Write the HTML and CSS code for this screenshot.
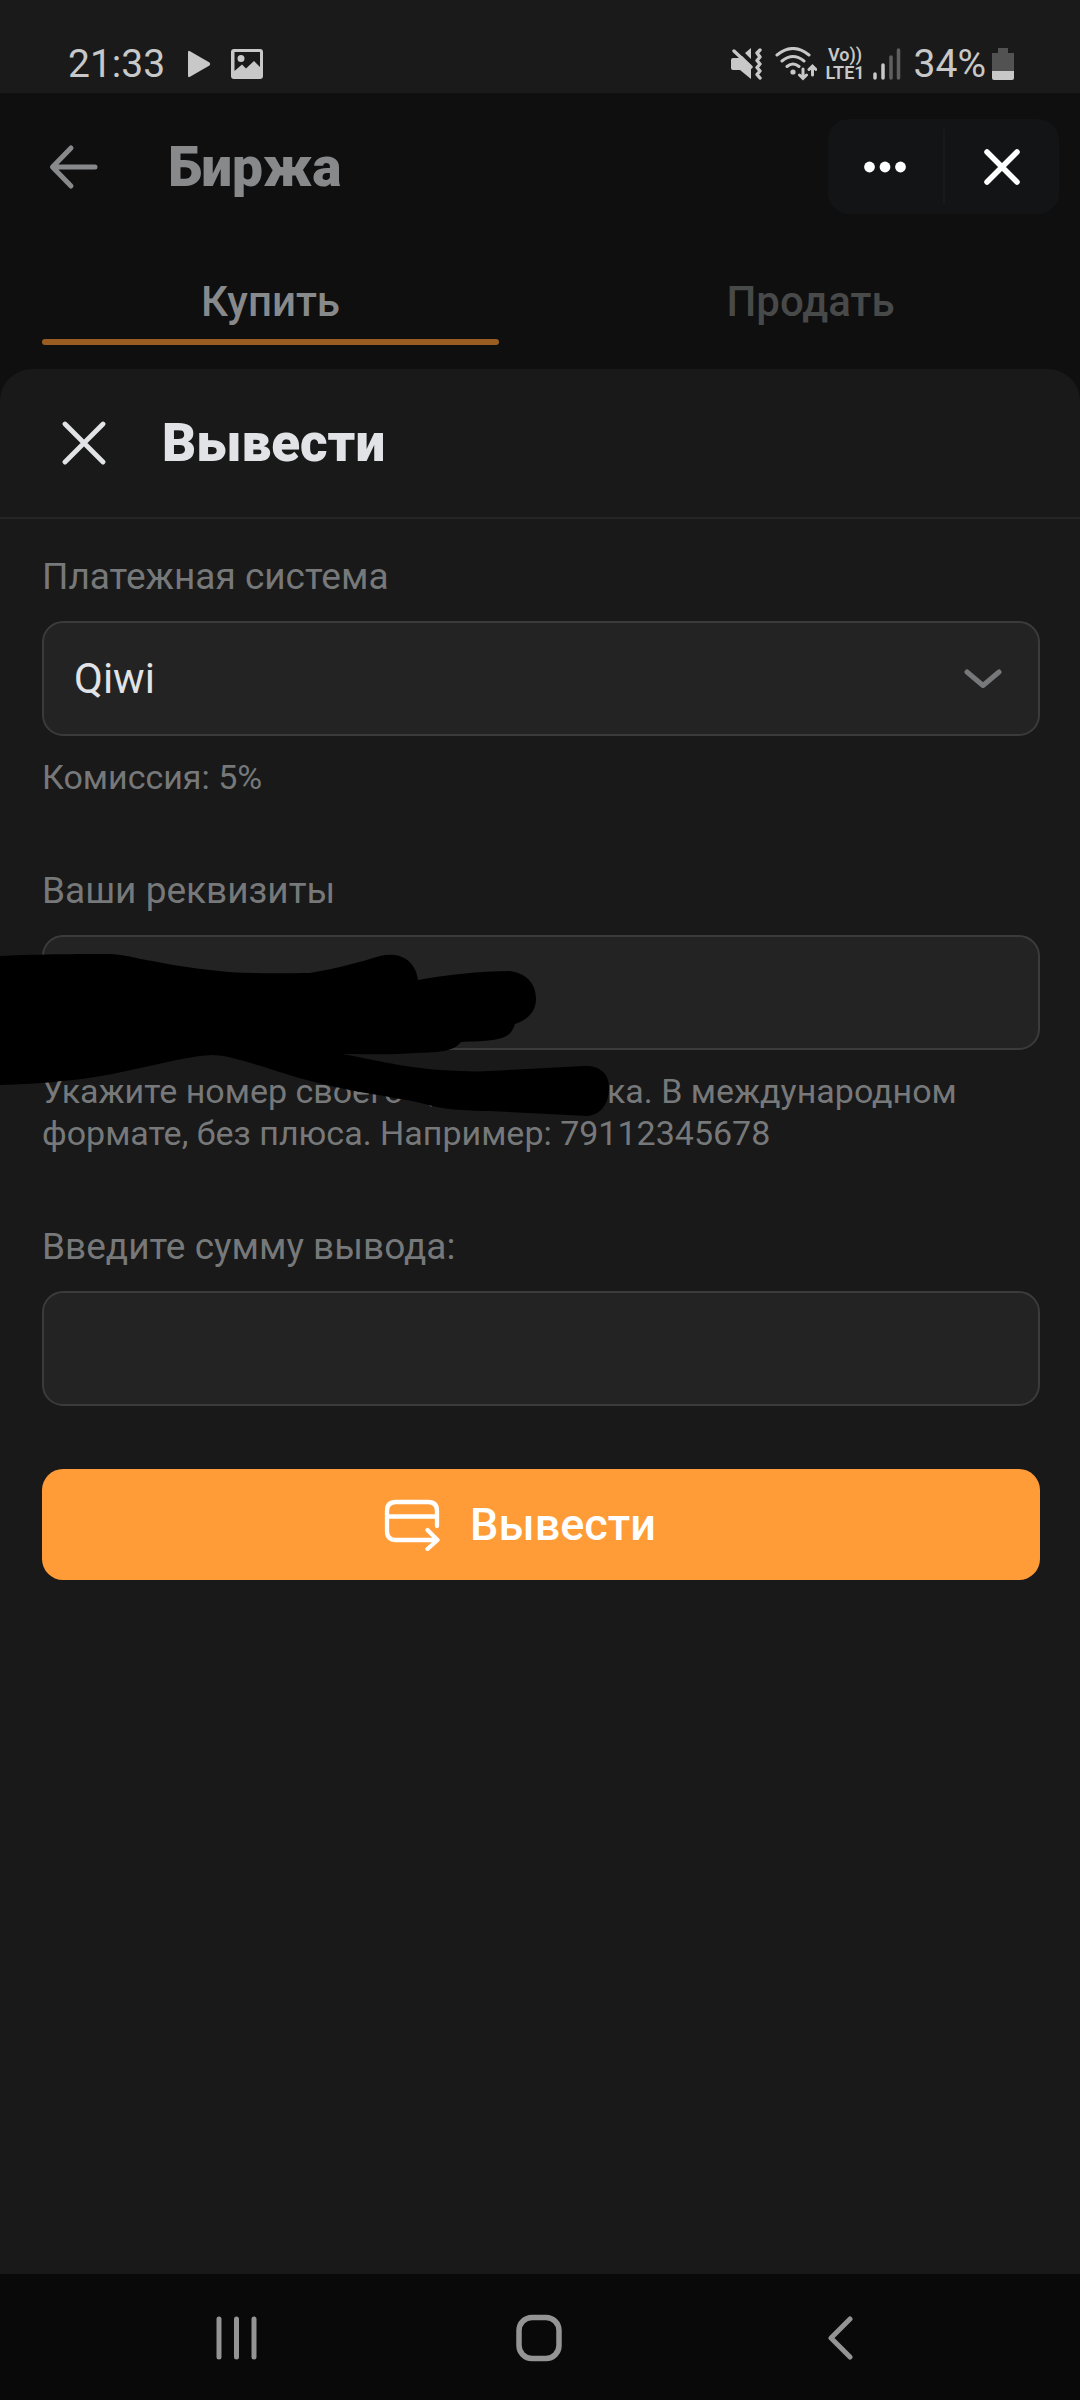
FILE: index.html
```html
<!DOCTYPE html>
<html lang="ru">
<head>
<meta charset="utf-8">
<meta name="viewport" content="width=device-width">
<title>Биржа — Вывести</title>
<link rel="stylesheet" href="styles.css">
</head>
<body>
<div class="status-bar">
  <div class="status-left">
    <span class="clock">21:33</span>
    <svg class="icon-play" width="24" height="28" viewBox="0 0 24 28" aria-hidden="true"><path d="M1 2.500Q1 0 3 1.200L22.500 12.500Q24 14 22.500 15.500L3 26.800Q1 28 1 25.500Z" fill="currentColor"/></svg>
    <svg width="32" height="30" viewBox="0 0 32 30" aria-hidden="true"><path fill="currentColor" fill-rule="evenodd" d="M3 0H29Q32 0 32 3V27Q32 30 29 30H3Q0 30 0 27V3Q0 0 3 0ZM3.500 3V22L11 15.500L15 19.500L23 12L29 18V3ZM10 6A3.500 3.500 0 1 1 10 13A3.500 3.500 0 1 1 10 6Z"/></svg>
  </div>
  <div class="status-right">
    <svg width="32" height="32" viewBox="0 0 32 32" aria-hidden="true"><path d="M0 12Q0 10 2 10H8L11 8L20 17V31L9 22H2Q0 22 0 20ZM14 5L20 0V11Z" fill="currentColor"/><path d="M3 3L20 19M29 2L26 5L29 9L26 12.500L29 16L26 19.500L29 23L26 26.500L29 30" fill="none" stroke="currentColor" stroke-width="3.400" stroke-linecap="round" stroke-linejoin="round"/></svg>
    <svg width="42" height="34" viewBox="0 0 42 34" aria-hidden="true"><g fill="none" stroke="currentColor" stroke-width="3" stroke-linecap="round"><path d="M2 8Q18 -5 34 8M7 14Q18 5 29 14M12 19.500Q18 14.500 24 19.500"/><path d="M28 22V31M24.500 28L28 31.500L31.500 28M37.500 28V19.500M34 22.500L37.500 19L41 22.500"/></g><circle cx="18" cy="25" r="2.600" fill="currentColor"/></svg>
    <span class="volte"><span>Vo))</span><span>LTE1</span></span>
    <svg width="28" height="32" viewBox="0 0 28 32" aria-hidden="true"><g fill="none" stroke="currentColor" stroke-width="3.500" stroke-linecap="round"><path d="M2 26V30M10 17V30"/><path d="M18 9V30M25.500 2V30" opacity=".4"/></g></svg>
    <span class="charge">34%</span>
    <svg width="22" height="34" viewBox="0 0 22 34" aria-hidden="true"><path d="M6 1H16V6H22V24H0V6H6Z" fill="#525252"/><path d="M0 24H22V31Q22 33 20 33H2Q0 33 0 31Z" fill="currentColor"/></svg>
  </div>
</div>

<header class="app-header">
  <button class="icon-button back" aria-label="Назад"><svg width="50" height="46" viewBox="0 0 50 46"><path d="M46 23H4M22 4L3.500 23L22 42" fill="none" stroke="currentColor" stroke-width="5" stroke-linecap="round" stroke-linejoin="round"/></svg></button>
  <h1 class="app-title">Биржа</h1>
  <div class="capsule">
    <button class="icon-button" aria-label="Ещё"><svg width="44" height="12" viewBox="0 0 44 12" fill="currentColor"><circle cx="6.500" cy="6" r="5.400"/><circle cx="22" cy="6" r="5.400"/><circle cx="37.500" cy="6" r="5.400"/></svg></button>
    <button class="icon-button" aria-label="Закрыть приложение"><svg width="36" height="36" viewBox="0 0 36 36"><path d="M3 3L33 33M33 3L3 33" stroke="currentColor" stroke-width="5.500" stroke-linecap="round"/></svg></button>
  </div>
</header>

<nav class="tabs">
  <button class="tab active">Купить</button>
  <button class="tab">Продать</button>
</nav>

<main class="sheet">
  <div class="sheet-header">
    <button class="icon-button sheet-close" aria-label="Закрыть"><svg width="44" height="44" viewBox="0 0 44 44"><path d="M3 3L41 41M41 3L3 41" stroke="currentColor" stroke-width="4.800" stroke-linecap="round"/></svg></button>
    <h2 class="sheet-title">Вывести</h2>
  </div>
  <form class="form">
    <div class="field">
      <label class="label" for="system">Платежная система</label>
      <div class="control-wrap">
        <select class="control" id="system"><option>Qiwi</option></select>
        <svg class="chevron" width="38" height="20" viewBox="0 0 38 20" aria-hidden="true"><path d="M3 3L19 16.500L35 3" fill="none" stroke="currentColor" stroke-width="5" stroke-linecap="round" stroke-linejoin="round"/></svg>
      </div>
      <p class="hint">Комиссия: 5%</p>
    </div>
    <div class="field">
      <label class="label" for="account">Ваши реквизиты</label>
      <div class="control-wrap">
        <input class="control" id="account" type="text">
        <svg class="redaction" width="640" height="190" viewBox="0 936 640 190" aria-hidden="true"><path d="M0 957C40 955 90 955 112 955C132 957 138 960 152 962C180 968 210 971 228 973C260 975 290 974 310 974C335 970 360 963 380 957C403 952 416 964 418 981C445 976 480 972 510 972C530 975 536 988 536 1000C536 1013 527 1021 515 1025C511 1036 507 1038 498 1040C485 1043 472 1042 461 1043C453 1053 440 1053 416 1054C390 1056 370 1055 343 1055C370 1060 400 1068 441 1071C460 1072 475 1073 490 1072L584 1067C602 1066 609 1077 609 1088C609 1104 602 1115 588 1117L490 1112C465 1112 440 1110 425 1105C415 1103 410 1101 400 1100C375 1095 350 1092 327 1086C300 1080 280 1073 261 1067C240 1061 225 1056 212 1056C195 1057 180 1060 163 1064C130 1071 95 1080 61 1082C40 1085 20 1085 0 1086Z"/></svg>
      </div>
      <p class="hint">Укажите номер своего Qiwi кошелька. В международном формате, без плюса. Например: 79112345678</p>
    </div>
    <div class="field">
      <label class="label" for="amount">Введите сумму вывода:</label>
      <div class="control-wrap"><input class="control" id="amount" type="text"></div>
    </div>
    <button class="submit" type="button">
      <svg width="56" height="52" viewBox="0 0 56 52" aria-hidden="true"><path d="M53 27V12Q53 3 44 3H12Q3 3 3 12V32Q3 41 12 41H51M3 17.500H53M43.500 31L53.500 41L43.500 50" fill="none" stroke="currentColor" stroke-width="4.300" stroke-linecap="round" stroke-linejoin="round"/></svg>
      <span>Вывести</span>
    </button>
  </form>
</main>

<footer class="system-nav">
  <button class="icon-button" aria-label="Недавние"><svg width="42" height="44" viewBox="0 0 42 44"><path d="M3 3V41M20.500 3V41M38 3V41" stroke="currentColor" stroke-width="5" stroke-linecap="round"/></svg></button>
  <button class="icon-button" aria-label="Главный экран"><svg width="46" height="48" viewBox="0 0 46 48"><rect x="3" y="3.500" width="40" height="41" rx="13" fill="none" stroke="currentColor" stroke-width="5.500"/></svg></button>
  <button class="icon-button" aria-label="Назад"><svg width="26" height="44" viewBox="0 0 26 44"><path d="M23 3L4 22L23 41" fill="none" stroke="currentColor" stroke-width="5" stroke-linecap="round" stroke-linejoin="round"/></svg></button>
</footer>
</body>
</html>
```
FILE: styles.css
```css
* { box-sizing: border-box; }

body {
  margin: 0;
  min-height: 100vh;
  display: flex;
  flex-direction: column;
  background: #0f0f0f;
  color: #e1e3e6;
  font-family: Roboto, "Noto Sans", sans-serif;
}

h1, h2, p { margin: 0; }
svg { display: block; flex: none; }
button, input, select { font: inherit; color: inherit; }

.icon-button {
  display: flex;
  align-items: center;
  justify-content: center;
  padding: 0;
  border: 0;
  background: none;
}

/* Status bar */
.status-bar {
  display: flex;
  justify-content: space-between;
  height: 93px;
  padding: 36px 66px 0 68px;
  background: #1a1a1a;
  color: #c8c8c8;
}
.status-left, .status-right {
  display: flex;
  align-items: center;
  height: 56px;
}
.clock, .charge { font-size: 39px; line-height: 56px; }
.icon-play { margin: 0 20px 0 22px; }
.volte {
  display: flex;
  flex-direction: column;
  align-items: center;
  margin: 0 8px;
  font-size: 18px;
  line-height: 18px;
  font-weight: 600;
}
.status-right svg:nth-of-type(2) { margin-left: 12px; }
.charge { margin: 0 6px 0 13px; }

/* App header */
.app-header {
  display: flex;
  align-items: center;
  height: 147px;
  padding: 0 21px 0 42px;
}
.back { width: 63px; height: 63px; color: #88898b; }
.app-title {
  flex: 1;
  margin-left: 63px;
  font-size: 55px;
  line-height: 64px;
  font-weight: 900;
  color: #88898b;
}
.capsule {
  display: flex;
  width: 231px;
  height: 95px;
  border-radius: 21px;
  background: #131415;
  color: #fff;
}
.capsule .icon-button { flex: 1; }
.capsule .icon-button + .icon-button {
  height: 75px;
  margin: 10px 0;
  border-left: 2px solid #191a1b;
}

/* Tabs */
.tabs {
  display: flex;
  padding-bottom: 24px;
}
.tab {
  flex: 1;
  display: flex;
  flex-direction: column;
  align-items: center;
  gap: 12px;
  padding: 37px 41px 0 42px;
  border: 0;
  background: none;
  font-size: 42px;
  line-height: 50px;
  font-weight: 500;
  color: #484949;
}
.tab::after {
  content: "";
  width: 100%;
  height: 6px;
  border-radius: 3px;
}
.tab.active { color: #88898b; }
.tab.active::after { background: #995d22; }

/* Sheet */
.sheet {
  flex: 1;
  border-radius: 32px 32px 0 0;
  background: #191919;
}
.sheet-header {
  display: flex;
  align-items: center;
  height: 150px;
  padding: 0 42px;
  border-bottom: 2px solid #252525;
}
.sheet-close { width: 84px; height: 84px; }
.sheet-title {
  margin-left: 36px;
  font-size: 53px;
  line-height: 62px;
  font-weight: 900;
}

/* Form */
.form {
  display: flex;
  flex-direction: column;
  gap: 71px;
  padding: 36px 40px 42px 42px;
}
.label {
  display: block;
  margin-bottom: 22px;
  font-size: 37px;
  line-height: 44px;
  color: #76787a;
}
.control-wrap {
  position: relative;
  display: grid;
  align-items: center;
}
.control-wrap > * { grid-area: 1 / 1; }
.control {
  width: 100%;
  height: 115px;
  padding: 0 30px;
  border: 2px solid #3b3b3b;
  border-radius: 21px;
  outline: 0;
  appearance: none;
  background: #232323;
  font-size: 42px;
}
.chevron {
  justify-self: end;
  margin-right: 38px;
  color: #76787a;
  pointer-events: none;
}
.redaction {
  position: absolute;
  top: 0;
  left: -42px;
  fill: #000;
  pointer-events: none;
}
.hint {
  margin-top: 20px;
  font-size: 34px;
  line-height: 42px;
  color: #76787a;
}
.submit {
  display: flex;
  align-items: center;
  justify-content: center;
  gap: 30px;
  height: 111px;
  margin-top: -8px;
  padding: 0 42px 0 0;
  border: 0;
  border-radius: 21px;
  background: #ff9c37;
  color: #fff;
  font-size: 45px;
  line-height: 54px;
  font-weight: 500;
}

/* System navigation */
.system-nav {
  display: flex;
  justify-content: space-between;
  height: 126px;
  padding: 2px 190px 0 187px;
  background: #090909;
  color: #949494;
}
.system-nav .icon-button { width: 100px; }
```
